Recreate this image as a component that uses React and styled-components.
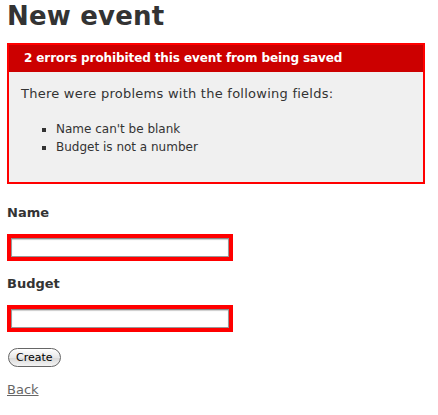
import React from 'react';
import styled, { createGlobalStyle } from 'styled-components';

const GlobalStyle = createGlobalStyle`
  body {
    margin: 0;
    background: #fff;
    color: #333;
    font-family: Verdana, "DejaVu Sans", sans-serif;
    font-size: 13px;
    line-height: 18px;
  }
`;

const Page = styled.div`
  padding: 0 7px;
`;

const Title = styled.h1`
  margin: 0;
  padding-top: 1px;
  font-size: 26px;
  line-height: 31px;
  font-weight: bold;
  color: #333;
  letter-spacing: 0.2px;
`;

const ErrorBox = styled.div`
  margin-top: 11px;
  width: 400px;
  border: 2px solid #f00;
  padding: 7px 7px 12px;
  background: #f0f0f0;
`;

const ErrorHeader = styled.h2`
  margin: -7px -7px 0;
  padding: 5px 5px 5px 15px;
  background: #c00;
  color: #fff;
  font-size: 12px;
  line-height: 17px;
  font-weight: bold;
  letter-spacing: -0.1px;
`;

const ErrorText = styled.p`
  margin: 0;
  padding: 13px 5px 5px;
  color: #333;
  letter-spacing: 0.25px;
`;

const ErrorList = styled.ul`
  margin: 12px 0 14px;
  padding-left: 40px;

  li {
    font-size: 12px;
    line-height: 18px;
    list-style: square;
  }
`;

const Field = styled.div`
  margin-top: ${(p) => p.$top}px;
`;

const Label = styled.label`
  display: block;
  font-weight: bold;
  font-size: 13px;
  line-height: 18px;
  margin-bottom: 12px;
`;

const ErrorWrap = styled.div`
  display: table;
  padding: 4px;
  background: #f00;
`;

const Input = styled.input`
  display: block;
  box-sizing: border-box;
  width: 218px;
  height: 19px;
  margin: 0;
  border: 1px solid #999;
  border-top-color: #888;
  box-shadow: inset 0 1px 1px rgba(0, 0, 0, 0.2);
  background: #fff;
  padding: 0 3px;
  font-size: 12px;
`;

const Button = styled.button`
  display: block;
  margin: 16px 0 0 1px;
  height: 19px;
  padding: 0 7px;
  border: 1px solid #666;
  border-radius: 10px;
  background: linear-gradient(#fff, #e8e8e8 50%, #d8d8d8 51%, #f4f4f4);
  font-family: "Lucida Grande", "DejaVu Sans", sans-serif;
  font-size: 11px;
  line-height: 16px;
  color: #000;
`;

const BackLink = styled.a`
  display: inline-block;
  margin-top: 14px;
  color: #666;
  text-decoration: underline;
  font-size: 13px;
`;

export default function App() {
  return (
    <Page>
      <GlobalStyle />
      <Title>New event</Title>
      <ErrorBox>
        <ErrorHeader>2 errors prohibited this event from being saved</ErrorHeader>
        <ErrorText>There were problems with the following fields:</ErrorText>
        <ErrorList>
          <li>Name can't be blank</li>
          <li>Budget is not a number</li>
        </ErrorList>
      </ErrorBox>
      <Field $top={20}>
        <Label>Name</Label>
        <ErrorWrap>
          <Input type="text" />
        </ErrorWrap>
      </Field>
      <Field $top={14}>
        <Label>Budget</Label>
        <ErrorWrap>
          <Input type="text" />
        </ErrorWrap>
      </Field>
      <Button>Create</Button>
      <BackLink href="#">Back</BackLink>
    </Page>
  );
}
